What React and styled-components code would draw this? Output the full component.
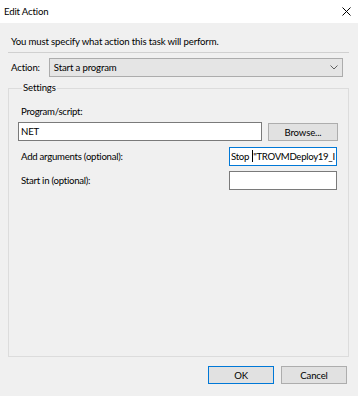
import React from 'react';
import styled, { createGlobalStyle } from 'styled-components';

const Global = createGlobalStyle`
  html, body { margin: 0; padding: 0; background: #f0f0f0; }
  * { box-sizing: border-box; }
`;

const Window = styled.div`
  width: 358px;
  height: 396px;
  display: flex;
  flex-direction: column;
  background: #f0f0f0;
  font-family: Lato, "Liberation Sans", sans-serif;
  font-size: 9.6px;
  letter-spacing: -0.15px;
  color: #000;
`;

const TitleBar = styled.div`
  height: 23px;
  background: #fff;
  display: flex;
  align-items: center;
  justify-content: space-between;
  padding: 0 7px 0 4px;
`;

const Title = styled.span`
  font-size: 9.6px;
`;

const Body = styled.div`
  flex: 1;
  display: flex;
  flex-direction: column;
  padding: 11px 9px 0 8px;
`;

const Intro = styled.div`
  padding-left: 3px;
  height: 15px;
  line-height: 15px;
`;

const Separator = styled.hr`
  margin: 3px 0 0;
  border: none;
  border-top: 1px solid #d0d0d0;
  height: 0;
`;

const ActionRow = styled.div`
  display: flex;
  align-items: center;
  margin-top: 5px;
  padding-left: 3px;
  gap: 9px;
`;

const Select = styled.div`
  flex: 1;
  height: 19px;
  margin-right: 6px;
  background: #e5e5e5;
  border: 1px solid #acacac;
  display: flex;
  align-items: center;
  justify-content: space-between;
  padding: 0 4px 0 4px;
`;

const Group = styled.fieldset`
  margin: 4px 0 0;
  padding: 10px 10px 0 9px;
  border: 1px solid #dcdcdc;
  height: 276px;
  min-width: 0;
`;

const Legend = styled.legend`
  padding: 0 1px;
  margin-left: 4px;
  line-height: 14px;
`;

const FieldLabel = styled.div`
  padding-left: 3px;
  line-height: 14px;
  letter-spacing: -0.25px;
`;

const ProgramRow = styled.div`
  display: flex;
  align-items: flex-start;
  gap: 6px;
  margin-top: 3px;
`;

const Input = styled.div`
  flex: ${p => (p.$grow ? 1 : 'none')};
  width: ${p => (p.$grow ? 'auto' : '108px')};
  height: 19px;
  background: #fff;
  border: 1px solid ${p => (p.$focus ? '#0078d7' : '#7a7a7a')};
  padding: 0 ${p => (p.$focus ? 1 : 2)}px;
  line-height: 17px;
  letter-spacing: ${p => (p.$focus ? '-0.3px' : '-0.15px')};
  white-space: nowrap;
  overflow: hidden;
`;

const Caret = styled.span`
  display: inline-block;
  width: 1px;
  height: 12px;
  background: #000;
  vertical-align: -2px;
  margin: 0 0 0 1px;
`;

const Button = styled.div`
  width: ${p => p.$w || 66}px;
  height: 18px;
  background: #e1e1e1;
  border: 1px solid ${p => (p.$primary ? '#0078d7' : '#adadad')};
  display: flex;
  align-items: center;
  justify-content: center;
  margin-top: ${p => p.$mt || 0}px;
`;

const Args = styled.div`
  display: grid;
  grid-template-columns: 1fr 108px;
  row-gap: 5px;
  align-items: center;
  margin-top: 6px;
  margin-right: 1px;
`;

const Footer = styled.div`
  display: flex;
  justify-content: flex-end;
  gap: 7px;
  padding: 9px 2px 0 0;
`;

const Close = () => (
  <svg width="9" height="9" viewBox="0 0 9 9">
    <path d="M0.5 0.5 L8.5 8.5 M8.5 0.5 L0.5 8.5" stroke="#000" strokeWidth="1" />
  </svg>
);

const Chevron = () => (
  <svg width="8" height="5" viewBox="0 0 8 5">
    <path d="M0.5 0.5 L4 4 L7.5 0.5" stroke="#606060" fill="none" strokeWidth="1" />
  </svg>
);

export default function App() {
  return (
    <Window>
      <Global />
      <TitleBar>
        <Title>Edit Action</Title>
        <Close />
      </TitleBar>
      <Body>
        <Intro>You must specify what action this task will perform.</Intro>
        <Separator />
        <ActionRow>
          <span>Action:</span>
          <Select>
            <span>Start a program</span>
            <Chevron />
          </Select>
        </ActionRow>
        <Group>
          <Legend>Settings</Legend>
          <FieldLabel>Program/script:</FieldLabel>
          <ProgramRow>
            <Input $grow>NET</Input>
            <Button $w={70} $mt={1}>Browse...</Button>
          </ProgramRow>
          <Args>
            <FieldLabel>Add arguments (optional):</FieldLabel>
            <Input $focus>Stop <Caret />"TROVMDeploy19_I</Input>
            <FieldLabel>Start in (optional):</FieldLabel>
            <Input />
          </Args>
        </Group>
        <Footer>
          <Button $primary>OK</Button>
          <Button>Cancel</Button>
        </Footer>
      </Body>
    </Window>
  );
}
